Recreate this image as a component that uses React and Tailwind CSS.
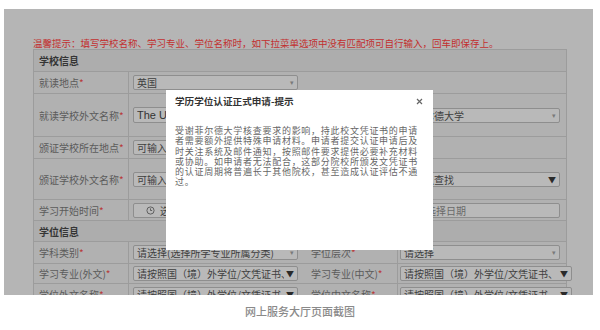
import React from "react";

const font = { fontFamily: '"Noto Sans CJK SC", "Liberation Sans", sans-serif' };

const Req = () => <span className="text-[#b83a3a]">*</span>;

const Box = ({ children, arrow, dark, className = "" }) => (
  <div
    className={`flex h-[15px] items-center rounded-[2px] border border-[#8e8e8e] bg-[#b9b9b9] pl-[3px] pr-[3px] text-[10px] text-[#3f3f3f] ${className}`}
  >
    <span className="flex-1 overflow-hidden whitespace-nowrap leading-[13px]">{children}</span>
    {arrow && (
      <span className={`shrink-0 pl-[2px] leading-[13px] ${dark ? "text-[8px] text-[#2a2a2a]" : "text-[7px] text-[#7a7a7a]"}`}>
        {dark ? "▼" : "▾"}
      </span>
    )}
  </div>
);

const Row = ({ h, label, req, left, rightLabel, rightReq, right, divider }) => (
  <div className="flex border-b border-[#9c9c9c]" style={{ height: h }}>
    <div className="flex w-[95px] shrink-0 items-center border-r border-[#9c9c9c] pl-[5px] text-[10px] text-[#5b5b5b]">
      {label}
      {req && <Req />}
    </div>
    <div className="flex w-[172px] shrink-0 items-center pl-[4px] pr-[3px]">{left}</div>
    <div
      className={`flex w-[97px] shrink-0 items-center pl-[10px] text-[10px] text-[#5b5b5b] ${divider ? "border-r border-[#9c9c9c]" : ""}`}
    >
      {rightLabel}
      {rightReq && <Req />}
    </div>
    <div className="flex flex-1 items-center pl-[2px] pr-[6px]">{right}</div>
  </div>
);

const Header = ({ title, h }) => (
  <div
    className="flex items-center border-b border-[#9c9c9c] bg-[#adadad] pl-[5px] text-[10px] font-bold text-[#353535]"
    style={{ height: h }}
  >
    {title}
  </div>
);

const Modal = () => (
  <div className="absolute left-[162px] top-[81px] h-[160px] w-[267px] bg-white">
    <div className="flex h-[22px] items-center justify-between pl-[9px] pr-[10px] pt-[1px]">
      <span className="text-[9.6px] font-semibold text-[#333]">学历学位认证正式申请-提示</span>
      <svg width="7" height="7" viewBox="0 0 7 7" className="text-[#666]">
        <path d="M1 1L6 6M6 1L1 6" stroke="currentColor" strokeWidth="1.2" />
      </svg>
    </div>
    <div className="pl-[9px] pt-[14px] text-[9px] leading-[10.3px] tracking-[0.72px] text-[#666]">
      <div>受谢菲尔德大学核查要求的影响，持此校文凭证书的申请</div>
      <div>者需要额外提供特殊申请材料。申请者提交认证申请后及</div>
      <div>时关注系统及邮件通知，按照邮件要求提供必要补充材料</div>
      <div>或协助。如申请者无法配合，这部分院校所颁发文凭证书</div>
      <div>的认证周期将普遍长于其他院校，甚至造成认证评估不通</div>
      <div>过。</div>
    </div>
  </div>
);

const LONG = "请按照国（境）外学位/文凭证书、";

export default function App() {
  return (
    <div className="flex h-[330px] w-[600px] flex-col bg-white" style={font}>
      <div className="relative ml-[4px] mt-[9px] h-[286px] w-[589px] overflow-hidden bg-[#b5b5b5]">
        <div className="pl-[29px] pt-[28px]">
          <div className="h-[12px] text-[9.5px] leading-[12px] text-[#c22f2f]">
            温馨提示：填写学校名称、学习专业、学位名称时，如下拉菜单选项中没有匹配项可自行输入，回车即保存上。
          </div>
          <div className="w-[534px] border-x border-t border-[#9c9c9c] bg-[#b1b1b1]">
            <Header title="学校信息" h={22} />
            <Row h={22} label="就读地点" req left={<Box arrow className="w-full">英国</Box>} />
            <Row
              h={43}
              label="就读学校外文名称"
              req
              left={
                <Box className="!h-[16px] w-full border-[#6f7c8e] text-[11px] text-[#333]">
                  <span style={{ fontFamily: '"Liberation Sans", sans-serif' }}>The University of Sheffield</span>
                </Box>
              }
              right={<Box arrow className="w-full">谢菲尔德大学</Box>}
            />
            <Row h={22} label="颁证学校所在地点 " req left={<Box arrow className="w-full">可输入查找</Box>} />
            <Row
              h={41}
              label="颁证学校外文名称 "
              req
              left={<Box className="w-full">可输入查找</Box>}
              right={<Box arrow dark className="w-full">可输入查找</Box>}
            />
            <Row
              h={21}
              label="学习开始时间 "
              req
              left={
                <Box className="w-full">
                  <span className="inline-flex items-center gap-[5px] pl-[9px]">
                    <svg width="9" height="9" viewBox="0 0 10 10" className="text-[#555]">
                      <circle cx="5" cy="5" r="4" fill="none" stroke="currentColor" strokeWidth="1" />
                      <path d="M5 2.6V5h1.8" fill="none" stroke="currentColor" strokeWidth="1" />
                    </svg>
                    选择日期
                  </span>
                </Box>
              }
              right={<Box className="w-full text-[#6a6a6a]"><span className="pl-[22px]">选择日期</span></Box>}
            />
            <Header title="学位信息" h={21} />
            <Row
              h={22}
              label="学科类别 "
              req
              left={<Box arrow className="w-full text-[9.6px]">请选择(选择所学专业所属分类)</Box>}
              rightLabel="学位层次 "
              rightReq
              right={<Box arrow className="w-full">请选择</Box>}
              divider
            />
            <Row
              h={20}
              label="学习专业(外文)"
              req
              left={<Box arrow dark className="w-full text-[9.4px]">{LONG}</Box>}
              rightLabel="学习专业(中文) "
              rightReq
              right={<Box arrow dark className="w-full text-[9.4px]">{LONG}</Box>}
              divider
            />
            <Row
              h={22}
              label="学位外文名称 "
              req
              left={<Box arrow dark className="w-full text-[9.4px]">{LONG}</Box>}
              rightLabel="学位中文名称"
              rightReq
              right={<Box arrow dark className="w-full text-[9.4px]">{LONG}</Box>}
              divider
            />
          </div>
        </div>
        <Modal />
      </div>
      <div className="mt-[8px] text-center text-[11px] font-medium text-[#8a8a8a]">网上服务大厅页面截图</div>
    </div>
  );
}
